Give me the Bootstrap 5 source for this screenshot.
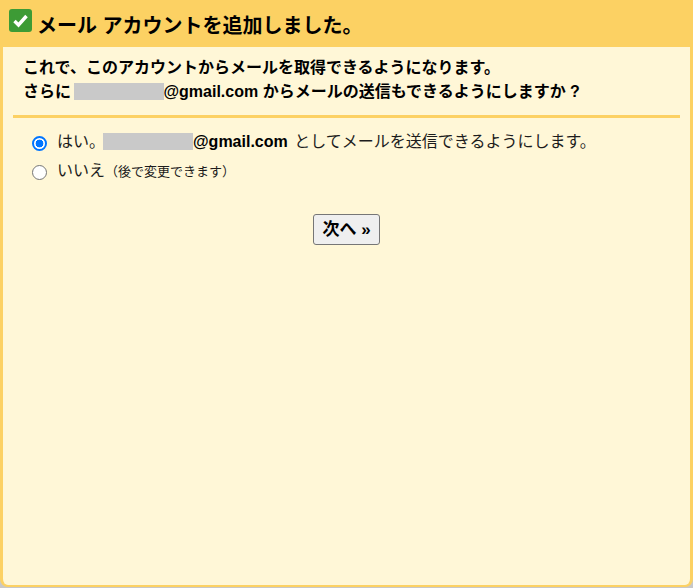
<!DOCTYPE html>
<html lang="ja">
<head>
<meta charset="utf-8">
<title>メール アカウントを追加しました</title>
<link href="https://cdn.jsdelivr.net/npm/bootstrap@5.3.0/dist/css/bootstrap.min.css" rel="stylesheet">
<style>
html, body { height: 100%; }
body { background: #c8c8c8; font-family: "Liberation Sans", "Noto Sans CJK JP", sans-serif; color: #000; font-size: 16px; }
.frame { height: 587px; background: #fff7d7; border: 3px solid #fcd163; border-top: 0; border-bottom-width: 2px; border-radius: 0 0 8px 8px; }
.head { height: 47px; margin: 0 -3px; padding: 9px 0 0 9px; background: #fcd163; gap: 5px; }
.head h1 { font-size: 20px; font-weight: 700; line-height: 30px; margin: 0; padding-top: 2px; }
.tick { width: 23px; height: 23px; background: #3d9b35; border-radius: 3px; flex: none; }
.intro { padding: 9px 0 0 20px; font-weight: 700; line-height: 24px; }
.mask { display: inline-block; width: 90px; height: 17px; background: #c9c9c9; vertical-align: -3px; }
.intro .mask { margin: 0 -1px 0 -1px; }
.rule { height: 3px; background: #fcd163; margin: 11px 10px 0; }
.opts { padding: 12px 0 0 29px; gap: 5px; }
.opt { gap: 10px; line-height: 24px; min-height: 24px; padding: 0; margin: 0; }
.opt .form-check-input { width: 15px; height: 15px; margin: 0; flex: none; position: relative; top: 1px; float: none; background-image: none; background-color: #fff; border: 1.5px solid #767676; box-shadow: none; }
.opt .form-check-input:checked { background-color: #fff; background-image: radial-gradient(circle, #0075ff 0, #0075ff 3.6px, #fff 4.2px); border: 2px solid #0075ff; }
.opt label { margin: 0; color: #1c1c1c; }
.opt .mask { margin-left: -2px; }
.opt b { color: #000; margin-right: 2px; }
.opt .note { font-size: 13px; }
.go { padding-top: 30px; }
.nextbtn { width: 67px; height: 31px; padding: 0; font-size: 17px; font-weight: 700; line-height: 1; color: #000; background: #efefef; border: 1px solid #767676; border-radius: 3px; }
</style>
</head>
<body>
<div class="frame">
  <div class="head d-flex align-items-start">
    <svg class="tick" viewBox="0 0 23 23" aria-hidden="true"><path d="M5.5 12l4 4 8-9" fill="none" stroke="#fff" stroke-width="3.4"/></svg>
    <h1>メール アカウントを追加しました。</h1>
  </div>
  <div class="intro">
    <div>これで、このアカウントからメールを取得できるようになります。</div>
    <div>さらに <span class="mask"></span>@gmail.com からメールの送信もできるようにしますか ?</div>
  </div>
  <div class="rule"></div>
  <div class="opts d-flex flex-column">
    <div class="opt form-check d-flex align-items-center">
      <input class="form-check-input" type="radio" name="send" id="yes" checked>
      <label class="form-check-label" for="yes">はい。<span class="mask"></span><b>@gmail.com</b> としてメールを送信できるようにします。</label>
    </div>
    <div class="opt form-check d-flex align-items-center">
      <input class="form-check-input" type="radio" name="send" id="no">
      <label class="form-check-label" for="no">いいえ<span class="note">（後で変更できます）</span></label>
    </div>
  </div>
  <div class="go text-center">
    <button type="button" class="btn nextbtn">次へ »</button>
  </div>
</div>
<script src="https://cdn.jsdelivr.net/npm/bootstrap@5.3.0/dist/js/bootstrap.bundle.min.js"></script>
</body>
</html>
